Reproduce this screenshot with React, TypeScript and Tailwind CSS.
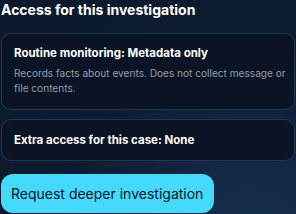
export default function App() {
  return (
    <div
      className="w-[296px] h-[214px] overflow-hidden bg-[radial-gradient(circle_at_85%_110%,#163050_0%,#0d1b30_55%,#0c192d_100%)] pl-[1px] pr-[1px] text-white"
      style={{ fontFamily: 'Inter, "Liberation Sans", sans-serif' }}
    >
      <h2 className="text-[14px] font-bold leading-[20px]">Access for this investigation</h2>
      <div className="mt-[13px] h-[77px] rounded-[10px] border border-[#1f3553] bg-[#0a1424] pl-[12px] pr-[6px] pt-[11px]">
        <div className="text-[11.5px] font-bold leading-[16px]">Routine monitoring: Metadata only</div>
        <div className="mt-[5px] text-[10.1px] leading-[15px] text-[#939cab]">
          Records facts about events. Does not collect message or file contents.
        </div>
      </div>
      <div className="mt-[9px] h-[42px] rounded-[10px] border border-[#1f3553] bg-[#0a1424] px-[12px] pt-[12px]">
        <div className="text-[11.5px] font-bold leading-[16px]">Extra access for this case: None</div>
      </div>
      <button className="mt-[13px] h-[39px] w-[213px] rounded-[12px] bg-[#45d9fd] text-left pl-[10px] text-[14px] text-[#0b1626]">
        Request deeper investigation
      </button>
    </div>
  );
}
